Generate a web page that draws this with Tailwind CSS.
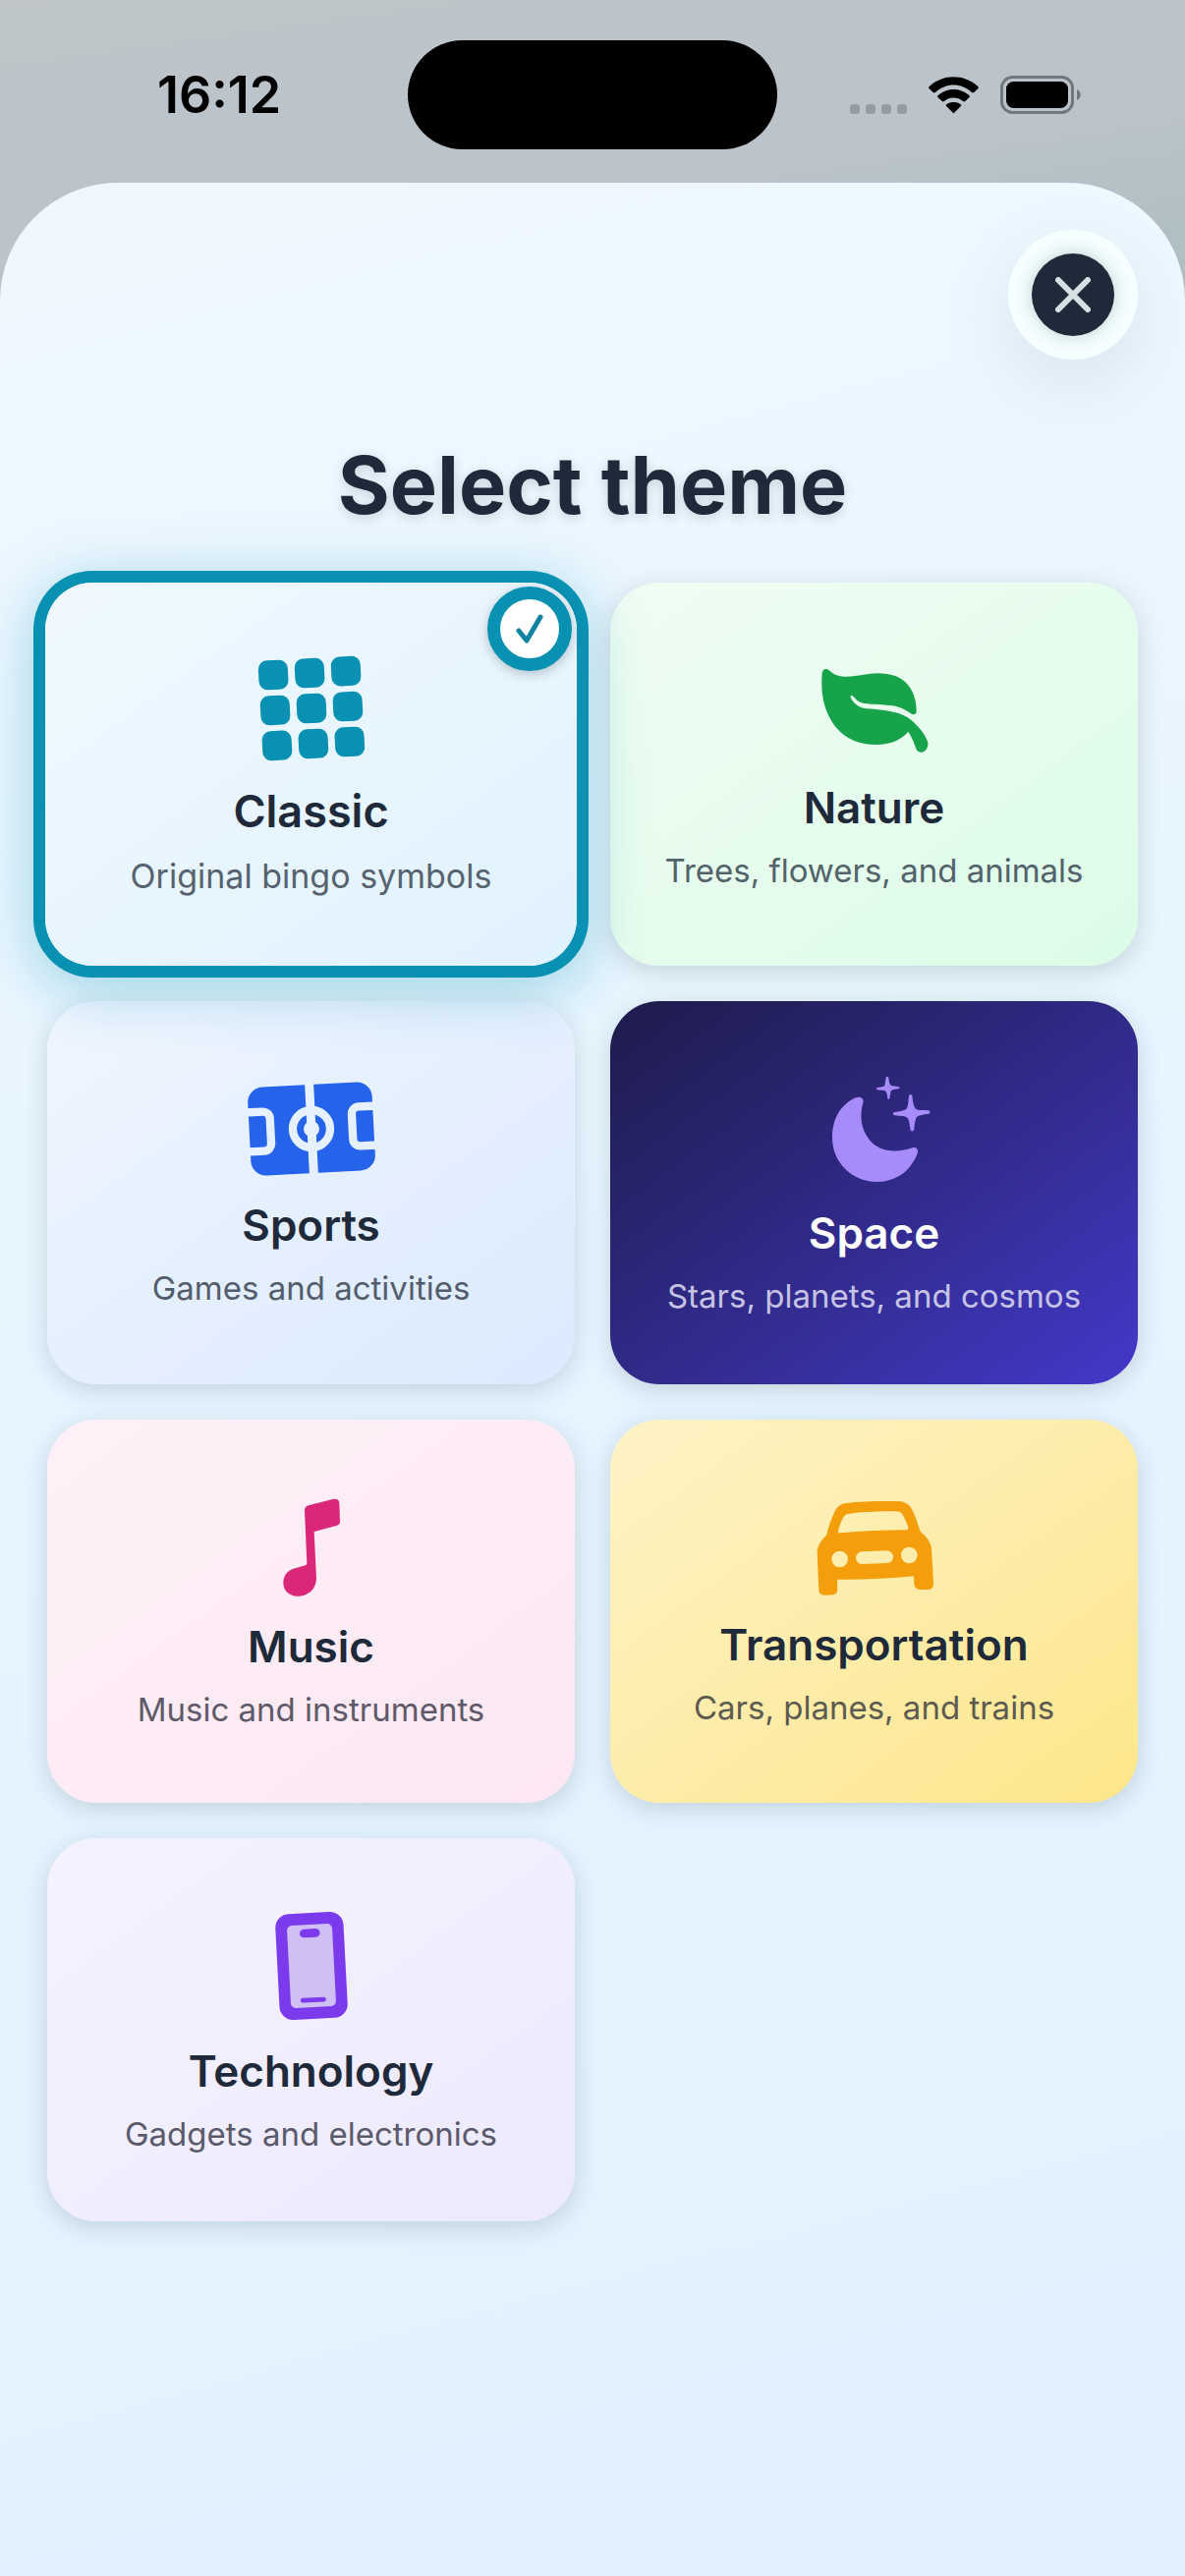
<!DOCTYPE html>
<html lang="en">
<head>
    <meta charset="UTF-8">
    <meta name="viewport" content="width=device-width, initial-scale=1.0">
    <script src="https://cdn.jsdelivr.net/npm/@tailwindcss/browser@4"></script>
    <title>Select theme</title>
</head>
<body class="min-h-screen flex flex-col bg-[linear-gradient(172deg,#c0c6c7_0px,#bcc4cb_130px,#bcc4cb_260px,#b0bfc4_400px)] font-[Inter,Roboto,sans-serif] text-gray-800">
    <!-- Status bar -->
    <div class="h-[186px] px-[106px] pt-[41px] grid grid-cols-[1fr_376px_1fr] items-start text-black">
        <p class="h-[111px] pl-[54px] flex items-center text-[52px] leading-none font-semibold">16:12</p>
        <div class="h-[111px] rounded-full bg-black"></div>
        <div class="h-[111px] flex items-center justify-end gap-[22px]">
            <div class="flex gap-1.5 mt-7">
                <span class="size-2.5 rounded-[3px] bg-[#959da2]"></span>
                <span class="size-2.5 rounded-[3px] bg-[#959da2]"></span>
                <span class="size-2.5 rounded-[3px] bg-[#959da2]"></span>
                <span class="size-2.5 rounded-[3px] bg-[#959da2]"></span>
            </div>
            <svg class="w-[51px] h-[38px]" viewBox="0 0 153 114" aria-hidden="true">
                <path d="M2 37C-1 34 0 32 3 29C45-9 108-9 150 29C153 32 154 34 151 37L139 48C137 50 135 50 132 48C100 18 53 18 21 48C18 50 16 50 14 48Z"/>
                <path d="M29 64C26 61 27 59 30 56C57 33 96 33 123 56C126 59 127 61 124 64L112 75C110 77 108 77 105 75C89 61 64 61 48 75C45 77 43 77 41 75Z"/>
                <path d="M55 91C52 88 53 86 56 84C68 76 85 76 97 84C100 86 101 88 98 91L80 109C77 113 76 113 73 109Z"/>
            </svg>
            <svg class="w-[82px] h-[39px]" viewBox="0 0 82 39" aria-hidden="true">
                <rect x="1.5" y="1.5" width="72" height="36" rx="11" fill="none" stroke="#72777b" stroke-width="3"/>
                <rect x="6" y="6" width="63" height="27" rx="7.5"/>
                <path d="M78 14C83 16 83 23 78 25Z" fill="#72777b"/>
            </svg>
        </div>
    </div>

    <!-- Theme sheet -->
    <main class="flex-1 px-12 pt-12 pb-12 rounded-t-[120px] bg-[linear-gradient(165deg,#f0f8ff_0%,#ecf7ff_16%,#e6f5ff_45%,#e3f3ff_75%,#e0f0ff_100%)]">
        <div class="flex justify-end">
            <button type="button" aria-label="Close" class="size-[132px] rounded-full bg-[#f5ffff] flex items-center justify-center shadow-[0_24px_72px_rgba(60,70,90,0.10)]">
                <span class="size-[84px] rounded-full bg-gray-800 flex items-center justify-center shadow-[0_0_18px_rgba(0,40,30,0.22)]">
                    <svg class="size-9" viewBox="0 0 36 36" fill="none" stroke="#d6dfe2" stroke-width="6" stroke-linecap="round" aria-hidden="true">
                        <path d="M3 3L33 33M33 3L3 33"/>
                    </svg>
                </span>
            </button>
        </div>

        <h1 class="mt-20 text-[81px] leading-[96px] font-bold text-center [text-shadow:0_3px_12px_rgba(0,30,30,0.16)]">Select theme</h1>

        <div class="mt-[51px] grid grid-cols-2 gap-9">
            <!-- Classic (selected) -->
            <button type="button" aria-pressed="true" class="relative h-[390px] -mx-0.5 rounded-[48px] flex flex-col items-center justify-center bg-linear-to-br from-[#f0f9ff] to-[#e0f2fe] ring-[12px] ring-[#0891b2] shadow-[0_12px_60px_12px_rgba(8,145,178,0.34)]">
                <svg class="w-[112px] h-[116px] fill-[#0891b2]" viewBox="-56 -58 112 116" aria-hidden="true">
                    <g transform="translate(0 1) rotate(-3)">
                        <rect x="-52" y="-51" width="30" height="30" rx="9"/>
                        <rect x="-15" y="-51" width="30" height="30" rx="9"/>
                        <rect x="22" y="-51" width="30" height="30" rx="9"/>
                        <rect x="-52" y="-15" width="30" height="30" rx="9"/>
                        <rect x="-15" y="-15" width="30" height="30" rx="9"/>
                        <rect x="22" y="-15" width="30" height="30" rx="9"/>
                        <rect x="-52" y="21" width="30" height="30" rx="9"/>
                        <rect x="-15" y="21" width="30" height="30" rx="9"/>
                        <rect x="22" y="21" width="30" height="30" rx="9"/>
                    </g>
                </svg>
                <span class="mt-5 text-[45px] leading-[56px] font-semibold">Classic</span>
                <span class="mt-4 text-[34px] leading-[44px] text-[#56636f]">Original bingo symbols</span>
                <span class="absolute top-1 right-[5px] size-[86px] rounded-full border-[13px] border-[#0891b2] bg-white flex items-center justify-center shadow-[0_3px_12px_rgba(0,0,0,0.22)]">
                    <svg class="w-7 h-[31px]" viewBox="0 0 28 31" fill="none" stroke="#0e84a1" stroke-width="5" stroke-linecap="round" stroke-linejoin="round" aria-hidden="true">
                        <path d="M3 17L11 27L25 3"/>
                    </svg>
                </span>
            </button>

            <!-- Nature -->
            <button type="button" aria-pressed="false" class="h-[390px] rounded-[50px] flex flex-col items-center justify-center bg-linear-to-br from-[#f0fdf4] to-[#dcfce7] shadow-[0_6px_24px_rgba(30,50,50,0.17)]">
                <svg class="w-[114px] h-[108px] fill-[#16a34a]" viewBox="98 60 342 324" aria-hidden="true">
                    <path d="M109 110C110 94 124 93 132 101C160 128 200 118 235 113C270 106 305 107 335 118C375 136 397 172 397 225C396 236 386 237 379 231C355 212 330 207 305 206C275 203 240 205 222 196C212 190 206 180 201 177C197 176 195 178 196 182C206 203 222 214 248 217C300 222 350 225 382 253C405 272 425 298 432 320C434 340 422 350 411 350C402 350 398 345 396 339C390 320 382 302 372 287C350 312 320 326 272 327C205 327 160 295 135 250C115 215 104 170 109 110Z"/>
                </svg>
                <span class="mt-[18px] text-[44px] leading-[54px] font-semibold">Nature</span>
                <span class="mt-4 text-[33px] leading-[42px] text-[#53636a]">Trees, flowers, and animals</span>
            </button>

            <!-- Sports -->
            <button type="button" aria-pressed="false" class="h-[390px] rounded-[50px] flex flex-col items-center justify-center bg-linear-to-br from-[#eff6ff] to-[#dbeafe] shadow-[0_6px_24px_rgba(30,50,50,0.17)]">
                <svg class="w-[134px] h-[106px]" viewBox="-201 -159 402 318" aria-hidden="true">
                    <mask id="pitch-lines">
                        <rect x="-201" y="-159" width="402" height="318" fill="white"/>
                        <g fill="none" stroke="black" stroke-width="25">
                            <circle r="57"/>
                            <rect x="-230" y="-60" width="105" height="120" rx="22"/>
                            <rect x="125" y="-60" width="105" height="120" rx="22"/>
                            <path d="M0 -150V150" stroke-width="27"/>
                        </g>
                        <circle r="24" fill="black"/>
                    </mask>
                    <g transform="rotate(-3)">
                        <rect x="-190" y="-135" width="380" height="270" rx="46" fill="#2563eb" mask="url(#pitch-lines)"/>
                    </g>
                </svg>
                <span class="mt-[18px] text-[44px] leading-[54px] font-semibold">Sports</span>
                <span class="mt-4 text-[33px] leading-[42px] text-[#535d6b]">Games and activities</span>
            </button>

            <!-- Space -->
            <button type="button" aria-pressed="false" class="h-[390px] rounded-[50px] flex flex-col items-center justify-center bg-linear-to-br from-[#1e1b4b] to-[#4338ca] shadow-[0_6px_24px_rgba(30,50,50,0.17)]">
                <svg class="w-[120px] h-[122px] fill-[#a78bfa]" viewBox="28 54 360 366" aria-hidden="true">
                    <path d="M151 142C162 137 174 143 174 153C162 195 165 235 192 270C222 308 275 312 326 294C336 292 342 300 340 310C320 365 275 399 215 399C140 399 79 340 79 265C79 205 105 162 151 142Z"/>
                    <path d="M313 136Q318 128 323 136C326 160 328 176 340 179C352 180 362 179 374 181Q381 186 374 191C350 194 336 196 334 207C330 222 330 230 328 241Q323 248 318 241C314 220 314 204 304 200C290 197 280 197 268 195Q261 191 268 186C290 183 302 181 307 174C312 160 311 150 313 136Z"/>
                    <path d="M243 80Q247 75 251 80C253 96 254 104 262 106L281 108Q288 111 281 115C266 117 258 118 257 126L254 144Q251 150 248 144C246 128 244 122 238 120L217 118Q210 115 217 111C232 109 239 108 240 101Z"/>
                </svg>
                <span class="mt-[18px] text-[44px] leading-[54px] font-semibold text-white">Space</span>
                <span class="mt-4 text-[33px] leading-[42px] text-[#c6c3e4]">Stars, planets, and cosmos</span>
            </button>

            <!-- Music -->
            <button type="button" aria-pressed="false" class="h-[390px] rounded-[50px] flex flex-col items-center justify-center bg-linear-to-br from-[#fff1f7] to-[#fce7f3] shadow-[0_6px_24px_rgba(30,50,50,0.17)]">
                <svg class="w-[66px] h-[112px] fill-[#db2777]" viewBox="100 57 198 336" aria-hidden="true">
                    <path d="M178 112Q178 101 190 97L264 78Q283 74 284 90L286 146Q287 154 277 158L207 177L214 320C213 352 190 374 156 374C130 374 113 356 113 333C113 305 132 292 155 287L180 280Q185 278 185 272Z"/>
                </svg>
                <span class="mt-[18px] text-[44px] leading-[54px] font-semibold">Music</span>
                <span class="mt-4 text-[33px] leading-[42px] text-[#5e5a69]">Music and instruments</span>
            </button>

            <!-- Transportation -->
            <button type="button" aria-pressed="false" class="h-[390px] rounded-[50px] flex flex-col items-center justify-center bg-linear-to-br from-[#fef3c7] to-[#fde68a] shadow-[0_6px_24px_rgba(30,50,50,0.17)]">
                <svg class="w-[120px] h-[108px] fill-[#f59e0b]" viewBox="60 66 360 324" aria-hidden="true">
                    <path fill-rule="evenodd" d="M94 190C100 165 108 140 118 120Q128 97 152 93C200 87 260 86 312 87Q340 88 352 108C365 130 372 158 380 180Q412 205 414 232L420 340Q420 356 404 357L380 357Q362 356 361 340L360 316C280 324 200 327 126 326L127 358Q126 372 112 373L88 374Q71 374 70 358L65 245C65 220 80 205 94 190ZM136 184Q127 186 129 177C134 160 138 148 143 140Q148 127 162 125C210 119 260 118 305 118Q320 118 326 128C334 142 340 156 343 168Q344 175 336 175C270 176 200 178 136 184ZM109 264a25 25 0 1 0 50 0a25 25 0 1 0 -50 0ZM321 252a25 25 0 1 0 50 0a25 25 0 1 0 -50 0ZM201 241L277 238A19 19 0 0 1 279 276L203 279A19 19 0 0 1 201 241Z"/>
                </svg>
                <span class="mt-[18px] text-[44px] leading-[54px] font-semibold">Transportation</span>
                <span class="mt-4 text-[33px] leading-[42px] text-[#5d5b51]">Cars, planes, and trains</span>
            </button>

            <!-- Technology -->
            <button type="button" aria-pressed="false" class="h-[390px] rounded-[50px] flex flex-col items-center justify-center bg-linear-to-br from-[#f5f3ff] to-[#ede9fe] shadow-[0_6px_24px_rgba(30,50,50,0.17)]">
                <svg class="w-20 h-[124px] fill-[#7c3aed]" viewBox="-120 -186 240 372" aria-hidden="true">
                    <g transform="rotate(-3)">
                        <rect x="-104" y="-162" width="208" height="324" rx="42"/>
                        <rect x="-69" y="-126" width="138" height="252" rx="15" fill="#cfbff5"/>
                        <rect x="-31" y="-113" width="62" height="26" rx="13"/>
                        <rect x="-39" y="97" width="78" height="14" rx="7"/>
                    </g>
                </svg>
                <span class="mt-[18px] text-[44px] leading-[54px] font-semibold">Technology</span>
                <span class="mt-4 text-[33px] leading-[42px] text-[#5a5a6b]">Gadgets and electronics</span>
            </button>
        </div>
    </main>
</body>
</html>
